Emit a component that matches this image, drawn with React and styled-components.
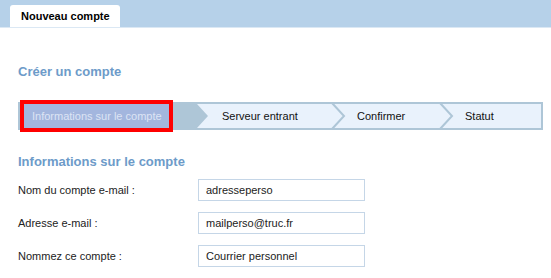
import styled, { createGlobalStyle } from "styled-components";

const GlobalStyle = createGlobalStyle`
  html, body {
    margin: 0;
    padding: 0;
    background: #ffffff;
    font-family: "Liberation Sans", Arial, sans-serif;
  }
`;

const steps = [
  { label: "Informations sur le compte", width: 177, active: true },
  { label: "Serveur entrant", width: 122 },
  { label: "Confirmer", width: 95 },
  { label: "Statut" },
];

const fields = [
  { label: "Nom du compte e-mail :", value: "adresseperso" },
  { label: "Adresse e-mail :", value: "mailperso@truc.fr" },
  { label: "Nommez ce compte :", value: "Courrier personnel" },
];

export default function App() {
  return (
    <Page>
      <GlobalStyle />
      <TabBar>
        <Tab>Nouveau compte</Tab>
      </TabBar>
      <Content>
        <Heading $top={36}>Créer un compte</Heading>
        <Stepper>
          {steps.map((step, i) => (
            <StepGroup key={step.label} $grow={!step.width}>
              {i > 0 && (
                <Separator viewBox="0 0 13 24" $filled={steps[i - 1].active}>
                  {steps[i - 1].active ? (
                    <polygon points="0,0 11,12 0,24" />
                  ) : (
                    <polyline points="0,-1 12,12 0,25" />
                  )}
                </Separator>
              )}
              <Step $active={step.active} $width={step.width}>
                {step.active ? (
                  <ActiveLabel>{step.label}</ActiveLabel>
                ) : (
                  step.label
                )}
              </Step>
            </StepGroup>
          ))}
        </Stepper>
        <Heading $top={24}>Informations sur le compte</Heading>
        <Form>
          {fields.map((f) => (
            <Row key={f.label}>
              <Label>{f.label}</Label>
              <Input defaultValue={f.value} />
            </Row>
          ))}
        </Form>
      </Content>
    </Page>
  );
}

const Page = styled.div`
  width: 551px;
  height: 278px;
  overflow: hidden;
  background: #ffffff;
`;

const TabBar = styled.div`
  height: 27px;
  background: #b6d1e9;
  border-bottom: 1px solid #dbe8f4;
  display: flex;
  align-items: flex-end;
  padding-left: 10px;
`;

const Tab = styled.div`
  height: 22px;
  padding: 0 10px 0 11px;
  background: #ffffff;
  border-radius: 3px 3px 0 0;
  display: flex;
  align-items: center;
  font-size: 11px;
  font-weight: bold;
  color: #000000;
`;

const Content = styled.div`
  padding: 0 8px 0 18px;
`;

const Heading = styled.h2`
  margin: ${(p) => p.$top}px 0 0;
  font-size: 13px;
  line-height: 15px;
  font-weight: bold;
  color: #6d9bc9;
`;

const Stepper = styled.div`
  margin-top: 23px;
  width: 521px;
  height: 24px;
  border: 2px solid #aec6d7;
  background: #e9f2fc;
  display: flex;
`;

const StepGroup = styled.div`
  display: flex;
  flex: ${(p) => (p.$grow ? "1" : "none")};
`;

const Step = styled.div`
  width: ${(p) => (p.$width ? `${p.$width}px` : "auto")};
  flex: ${(p) => (p.$width ? "none" : "1")};
  box-sizing: border-box;
  padding-left: ${(p) => (p.$active ? "4px" : "12px")};
  background: ${(p) => (p.$active ? "#aec6d7" : "transparent")};
  display: flex;
  align-items: center;
  font-size: 11px;
  color: #111111;
  white-space: nowrap;
`;

const ActiveLabel = styled.div`
  width: 145px;
  height: 24px;
  box-sizing: border-box;
  padding-left: 8px;
  background: #a3b6de;
  outline: 4px solid #ff0000;
  color: #dde4f4;
  display: flex;
  align-items: center;
`;

const Separator = styled.svg`
  width: 13px;
  height: 24px;
  flex: none;
  overflow: visible;
  fill: ${(p) => (p.$filled ? "#aec6d7" : "none")};
  stroke: ${(p) => (p.$filled ? "none" : "#aec6d7")};
  stroke-width: 2;
`;

const Form = styled.div`
  margin-top: 10px;
  display: flex;
  flex-direction: column;
  gap: 11px;
`;

const Row = styled.div`
  display: flex;
  align-items: center;
`;

const Label = styled.div`
  width: 180px;
  font-size: 11px;
  color: #222222;
`;

const Input = styled.input`
  width: 167px;
  height: 22px;
  box-sizing: border-box;
  margin: 0;
  padding: 0 7px;
  border: 1px solid #c5d6e7;
  font-family: "Liberation Sans", Arial, sans-serif;
  font-size: 11px;
  color: #222222;
  outline: none;
`;
